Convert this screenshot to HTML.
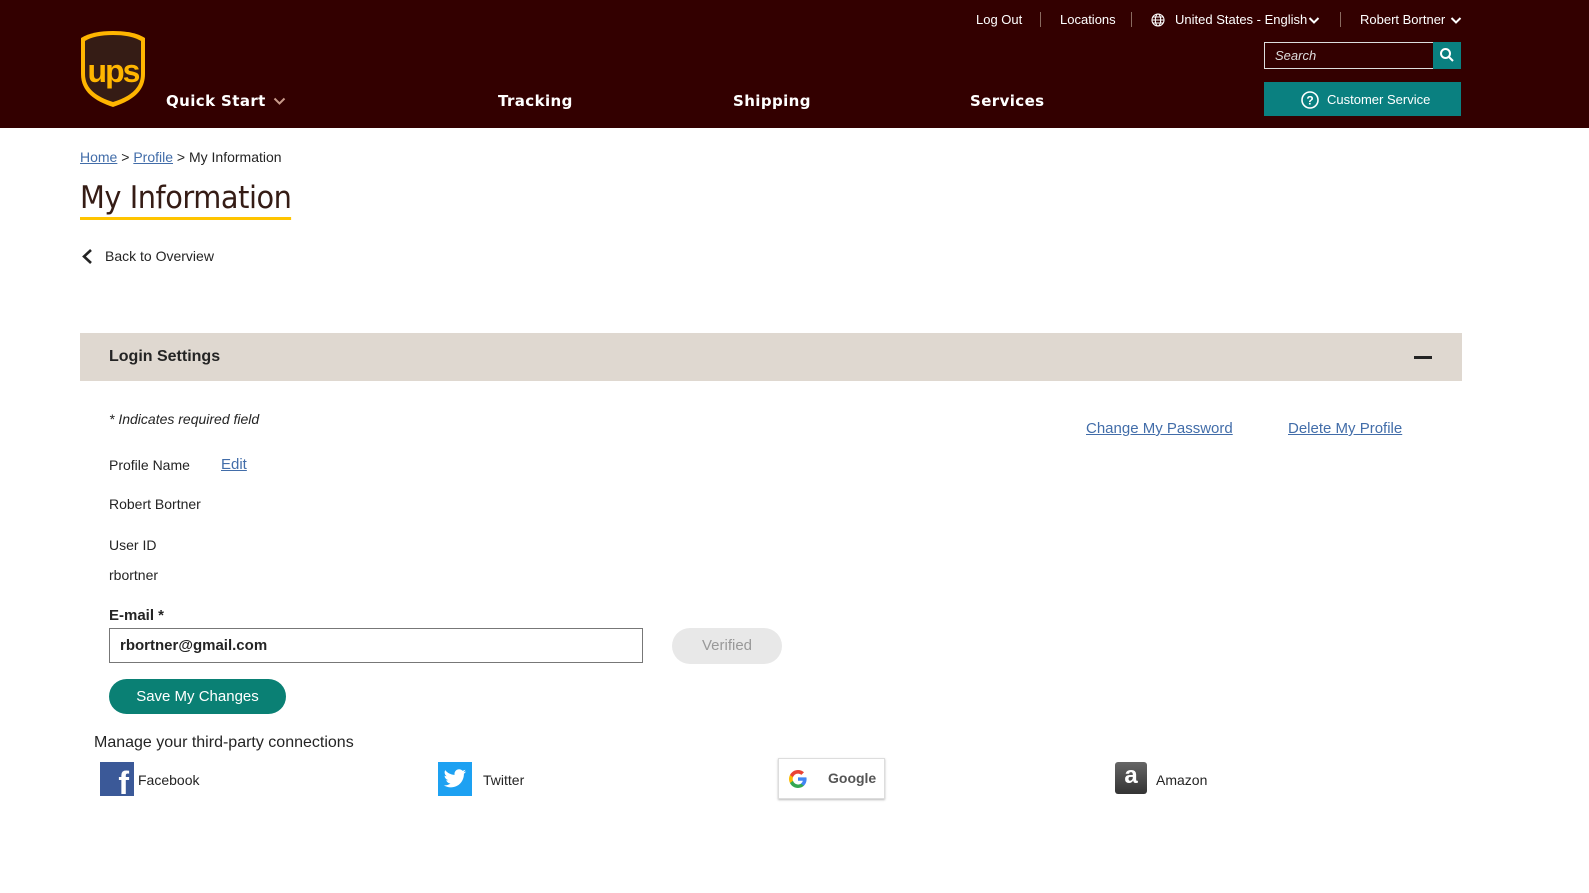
<!DOCTYPE html>
<html><head><meta charset="utf-8"><style>
*{box-sizing:border-box;margin:0;padding:0}
body{width:1589px;height:893px;background:#fff;font-family:"Liberation Sans",sans-serif;color:#242424;position:relative;overflow:hidden;font-size:14px}
.hdr{position:absolute;left:0;top:0;width:1589px;height:128px;background:#330000}
.a{position:absolute;white-space:nowrap}
.top{color:#fff;font-size:13px;top:12px}
.sep{position:absolute;top:12px;width:1px;height:15px;background:#8a6a60}
.nav{color:#fff;font-family:"DejaVu Sans",sans-serif;font-weight:bold;font-size:15px;top:92px;letter-spacing:.4px}
a{color:#426da9;text-decoration:underline}
</style></head><body>
<div class="hdr">
<svg class="a" style="left:80px;top:30px" width="66" height="78" viewBox="0 0 66 78">
<path d="M33 1C20 1 9 3 1 8V44C1 62 15 71 33 77C51 71 65 62 65 44V8C57 3 46 1 33 1Z" fill="#ffb500"/>
<path d="M33 5C21 5 11 7 5 11V44C5 59 17 67 33 72C49 67 61 59 61 44V11C55 7 45 5 33 5Z" fill="#351c15"/>
<text x="33" y="52" text-anchor="middle" font-family="Liberation Sans" font-weight="bold" font-size="32" fill="#ffb500" letter-spacing="-2">ups</text>
</svg>
<div class="a nav" style="left:166px">Quick Start</div>
<svg class="a" style="left:273px;top:97px" width="13" height="9" viewBox="0 0 13 9"><path d="M1.5 1.5L6.5 6.5L11.5 1.5" stroke="#c89a8a" stroke-width="2" fill="none"/></svg>
<div class="a nav" style="left:498px">Tracking</div>
<div class="a nav" style="left:733px">Shipping</div>
<div class="a nav" style="left:970px">Services</div>
<div class="a top" style="left:976px">Log Out</div>
<div class="sep" style="left:1040px"></div>
<div class="a top" style="left:1060px">Locations</div>
<div class="sep" style="left:1131px"></div>
<svg class="a" style="left:1151px;top:13px" width="14" height="14" viewBox="0 0 14 14" fill="none" stroke="#fff" stroke-width="1.1"><circle cx="7" cy="7" r="6"/><ellipse cx="7" cy="7" rx="2.7" ry="6"/><path d="M1 7H13M2 4H12M2 10H12"/></svg>
<div class="a top" style="left:1175px">United States - English</div>
<svg class="a" style="left:1308px;top:16px" width="12" height="9" viewBox="0 0 12 9"><path d="M1.5 2L6 6.5L10.5 2" stroke="#fff" stroke-width="2" fill="none"/></svg>
<div class="sep" style="left:1340px"></div>
<div class="a top" style="left:1360px">Robert Bortner</div>
<svg class="a" style="left:1450px;top:16px" width="12" height="9" viewBox="0 0 12 9"><path d="M1.5 2L6 6.5L10.5 2" stroke="#fff" stroke-width="2" fill="none"/></svg>
<div class="a" style="left:1264px;top:42px;width:170px;height:27px;border:1px solid #ddd;color:#ddd;font-style:italic;font-size:13px;padding:5px 10px">Search</div>
<div class="a" style="left:1433px;top:42px;width:28px;height:27px;background:#0a8080"></div>
<svg class="a" style="left:1439px;top:47px" width="16" height="16" viewBox="0 0 16 16" fill="none" stroke="#fff" stroke-width="2"><circle cx="6.5" cy="6.5" r="4.5"/><path d="M10 10L14 14"/></svg>
<div class="a" style="left:1264px;top:82px;width:197px;height:34px;background:#0a8080"></div>
<svg class="a" style="left:1301px;top:91px" width="18" height="18" viewBox="0 0 18 18" fill="none" stroke="#fff" stroke-width="1.6"><circle cx="9" cy="9" r="8"/><text x="9" y="13.5" text-anchor="middle" fill="#fff" stroke="none" font-family="Liberation Sans" font-weight="bold" font-size="12">?</text></svg>
<div class="a" style="left:1327px;top:92px;color:#fff;font-size:13px">Customer Service</div>
</div>
<div class="a" style="left:80px;top:149px;font-size:14px"><a href="#">Home</a> &gt; <a href="#">Profile</a> &gt; My Information</div>
<div class="a" style="left:80px;top:180px;font-size:31px;color:#351c15;border-bottom:3px solid #ffc400;padding-bottom:1px;font-family:'DejaVu Sans',sans-serif;letter-spacing:-0.5px;transform:scaleX(0.93);transform-origin:left">My Information</div>
<svg class="a" style="left:81px;top:248px" width="12" height="17" viewBox="0 0 12 17"><path d="M10 2L3 8.5L10 15" stroke="#242424" stroke-width="2.6" fill="none"/></svg>
<div class="a" style="left:105px;top:248px;font-size:14px">Back to Overview</div>
<div class="a" style="left:80px;top:333px;width:1382px;height:48px;background:#dfd8d0"></div>
<div class="a" style="left:109px;top:348px;font-weight:bold;font-size:16px">Login Settings</div>
<div class="a" style="left:1414px;top:356px;width:18px;height:3px;background:#242424"></div>
<div class="a" style="left:109px;top:411px;font-style:italic;font-size:14px">* Indicates required field</div>
<div class="a" style="left:1086px;top:420px;font-size:15px"><a href="#">Change My Password</a></div>
<div class="a" style="left:1288px;top:420px;font-size:15px"><a href="#">Delete My Profile</a></div>
<div class="a" style="left:109px;top:457px">Profile Name</div>
<div class="a" style="left:221px;top:456px;font-size:15px"><a href="#">Edit</a></div>
<div class="a" style="left:109px;top:496px">Robert Bortner</div>
<div class="a" style="left:109px;top:537px">User ID</div>
<div class="a" style="left:109px;top:567px">rbortner</div>
<div class="a" style="left:109px;top:607px;font-weight:bold;font-size:15px">E-mail *</div>
<div class="a" style="left:109px;top:628px;width:534px;height:35px;border:1px solid #777;padding:8px 10px;font-weight:bold;font-size:15px">rbortner@gmail.com</div>
<div class="a" style="left:672px;top:628px;width:110px;height:36px;border-radius:18px;background:#e8e8e8;color:#999;text-align:center;line-height:36px;font-size:15px">Verified</div>
<div class="a" style="left:109px;top:679px;width:177px;height:35px;border-radius:18px;background:#0a8074;color:#fff;text-align:center;line-height:35px;font-size:15px">Save My Changes</div>
<div class="a" style="left:94px;top:734px;font-size:16px">Manage your third-party connections</div>
<div class="a" style="left:100px;top:762px;width:34px;height:34px;background:#3b5998;color:#fff;font-weight:bold;font-size:32px;text-align:right;padding-right:5px;line-height:42px;overflow:hidden">f</div>
<div class="a" style="left:138px;top:772px;font-size:14px">Facebook</div>
<div class="a" style="left:438px;top:762px;width:34px;height:34px;background:#1da1f2"></div>
<svg class="a" style="left:443px;top:768px" width="24" height="22" viewBox="0 0 24 20"><path d="M23 2.5c-.8.4-1.7.6-2.6.7.9-.6 1.6-1.4 2-2.5-.9.5-1.9.9-2.9 1.1C18.6.9 17.4.3 16.1.3c-2.5 0-4.6 2.1-4.6 4.6 0 .4 0 .7.1 1C7.8 5.7 4.4 3.9 2.2 1.1c-.4.7-.6 1.5-.6 2.3 0 1.6.8 3 2.1 3.8-.8 0-1.5-.2-2.1-.6 0 2.2 1.6 4.1 3.7 4.5-.4.1-.8.2-1.2.2-.3 0-.6 0-.9-.1.6 1.8 2.3 3.2 4.3 3.2-1.6 1.2-3.6 2-5.7 2-.4 0-.7 0-1.1-.1 2 1.3 4.5 2.1 7.1 2.1 8.5 0 13.1-7 13.1-13.1v-.6c.9-.6 1.7-1.4 2.3-2.3z" fill="#fff"/></svg>
<div class="a" style="left:483px;top:772px;font-size:14px">Twitter</div>
<div class="a" style="left:778px;top:758px;width:107px;height:41px;border:1px solid #ddd;box-shadow:0 1px 2px #bbb"></div>
<svg class="a" style="left:789px;top:770px" width="18" height="18" viewBox="0 0 18 18"><path d="M17.6 9.2c0-.6-.1-1.2-.2-1.8H9v3.4h4.8c-.2 1.1-.8 2-1.8 2.7v2.2h2.9c1.7-1.6 2.7-3.9 2.7-6.5z" fill="#4285f4"/><path d="M9 18c2.4 0 4.5-.8 5.9-2.2l-2.9-2.2c-.8.5-1.8.9-3 .9-2.3 0-4.3-1.6-5-3.7H1v2.3C2.5 16 5.5 18 9 18z" fill="#34a853"/><path d="M4 10.8c-.2-.5-.3-1.1-.3-1.8s.1-1.2.3-1.8V5H1C.4 6.2 0 7.6 0 9s.4 2.8 1 4l3-2.2z" fill="#fbbc05"/><path d="M9 3.6c1.3 0 2.5.5 3.4 1.3L15 2.3C13.5.9 11.4 0 9 0 5.5 0 2.5 2 1 5l3 2.3c.7-2.1 2.7-3.7 5-3.7z" fill="#ea4335"/></svg>
<div class="a" style="left:828px;top:770px;font-size:14px;color:#555;font-weight:bold">Google</div>
<div class="a" style="left:1115px;top:762px;width:32px;height:32px;background:linear-gradient(#666,#333);border-radius:3px;color:#fff;text-align:center;font-size:24px;line-height:28px;font-weight:bold">a</div>
<div class="a" style="left:1156px;top:772px;font-size:14px">Amazon</div>
</body></html>
